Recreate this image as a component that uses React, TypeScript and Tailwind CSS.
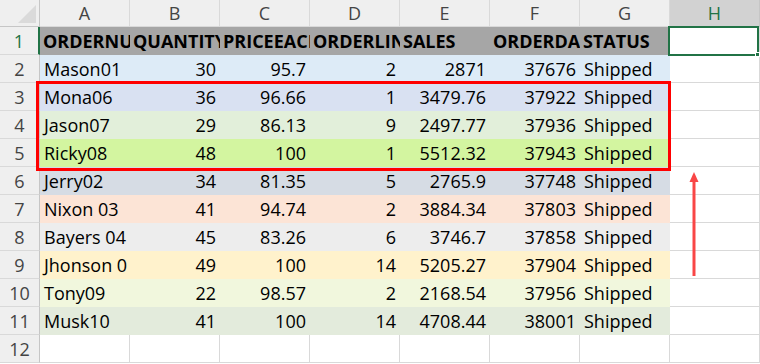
import React from 'react'

type Row = { fill: string; cells: (string | number)[] }

const COLS = ['A', 'B', 'C', 'D', 'E', 'F', 'G', 'H']

const HEADER = ['ORDERNUMBER', 'QUANTITY', 'PRICEEACH', 'ORDERLINENUMBER', 'SALES', 'ORDERDATE', 'STATUS']

const ROWS: Row[] = [
  { fill: 'bg-[#ddebf7]', cells: ['Mason01', 30, 95.7, 2, 2871, 37676, 'Shipped'] },
  { fill: 'bg-[#d9e1f2]', cells: ['Mona06', 36, 96.66, 1, 3479.76, 37922, 'Shipped'] },
  { fill: 'bg-[#e2efda]', cells: ['Jason07', 29, 86.13, 9, 2497.77, 37936, 'Shipped'] },
  { fill: 'bg-[#d3f5a0]', cells: ['Ricky08', 48, 100, 1, 5512.32, 37943, 'Shipped'] },
  { fill: 'bg-[#d6dce4]', cells: ['Jerry02', 34, 81.35, 5, 2765.9, 37748, 'Shipped'] },
  { fill: 'bg-[#fce4d6]', cells: ['Nixon 03', 41, 94.74, 2, 3884.34, 37803, 'Shipped'] },
  { fill: 'bg-[#ededed]', cells: ['Bayers 04', 45, 83.26, 6, 3746.7, 37858, 'Shipped'] },
  { fill: 'bg-[#fff2cc]', cells: ['Jhonson 0', 49, 100, 14, 5205.27, 37904, 'Shipped'] },
  { fill: 'bg-[#f1f7dd]', cells: ['Tony09', 22, 98.57, 2, 2168.54, 37956, 'Shipped'] },
  { fill: 'bg-[#e3ebdc]', cells: ['Musk10', 41, 100, 14, 4708.44, 38001, 'Shipped'] },
]

function RowHead({ n, active }: { n: number; active?: boolean }) {
  return (
    <div
      className={
        'flex items-center justify-center border-b border-[#d9d9d9] bg-[#efefef] ' +
        (active ? 'border-r-2 border-r-[#217346] text-[#217346]' : 'border-r border-r-[#c6c6c6] text-[#444]')
      }
    >
      {n}
    </div>
  )
}

function Blank() {
  return <div className="border-b border-r border-[#d9d9d9] bg-white" />
}

export default function App() {
  return (
    <div className="relative h-[364px] w-[760px] overflow-hidden bg-white font-['Open_Sans',sans-serif] text-[18px] leading-none text-black">
      <div className="grid grid-cols-[40px_repeat(8,90px)] grid-rows-[27px_repeat(12,28px)]">
        {/* corner */}
        <div className="relative border-b border-r border-[#c6c6c6] bg-[#efefef]">
          <div className="absolute bottom-[3px] right-[3px] h-0 w-0 border-b-[18px] border-l-[18px] border-b-[#dadada] border-l-transparent" />
        </div>
        {COLS.map((c) => (
          <div
            key={c}
            className={
              'flex items-center justify-center border-b border-r ' +
              (c === 'H'
                ? 'border-[#c6c6c6] bg-[#d2d2d2] text-[#217346]'
                : 'border-[#d9d9d9] bg-[#efefef] text-[#444]')
            }
          >
            {c}
          </div>
        ))}

        {/* row 1 */}
        <RowHead n={1} active />
        {HEADER.map((h) => (
          <div key={h} className="flex items-center overflow-hidden whitespace-nowrap bg-[#a6a6a6] px-[3px] font-bold">
            {h}
          </div>
        ))}
        <Blank />

        {ROWS.map((r, i) => (
          <React.Fragment key={i}>
            <RowHead n={i + 2} />
            {r.cells.map((v, j) => (
              <div
                key={j}
                className={
                  'flex items-center overflow-hidden whitespace-nowrap px-[4px] ' +
                  r.fill +
                  (typeof v === 'number' ? ' justify-end' : ' justify-start')
                }
              >
                {v}
              </div>
            ))}
            <Blank />
          </React.Fragment>
        ))}

        <RowHead n={12} />
        {COLS.map((c) => (
          <Blank key={c} />
        ))}
      </div>

      {/* selected cell H1 */}
      <div className="pointer-events-none absolute left-[668px] top-[26px] h-[30px] w-[91px] border-2 border-[#217346]" />
      <div className="pointer-events-none absolute left-[755px] top-[52px] h-[5px] w-[5px] border border-white bg-[#217346]" />

      {/* highlight box rows 3-5 */}
      <div className="pointer-events-none absolute left-[36px] top-[81px] h-[90px] w-[635px] border-[3px] border-[#ff0000]" />

      {/* arrow */}
      <svg className="pointer-events-none absolute left-[686px] top-[170px]" width="16" height="108" viewBox="0 0 16 108">
        <line x1="8" y1="10" x2="8" y2="106" stroke="#f94646" strokeWidth="3" />
        <polygon points="8,2 3.5,12 12.5,12" fill="#f94646" />
      </svg>
    </div>
  )
}
